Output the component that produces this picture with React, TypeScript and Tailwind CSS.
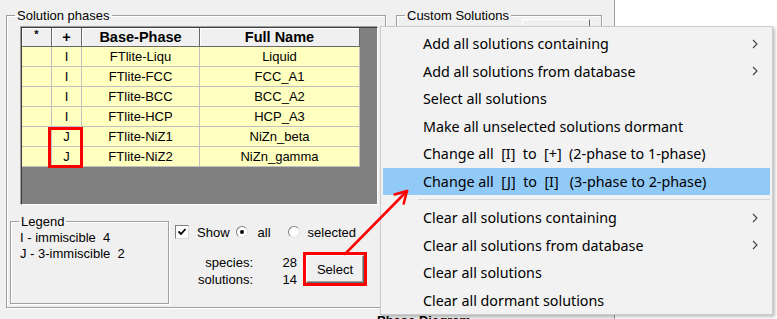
import React from "react";

type Row = { plus: string; base: string; full: string };

const rows: Row[] = [
  { plus: "I", base: "FTlite-Liqu", full: "Liquid" },
  { plus: "I", base: "FTlite-FCC", full: "FCC_A1" },
  { plus: "I", base: "FTlite-BCC", full: "BCC_A2" },
  { plus: "I", base: "FTlite-HCP", full: "HCP_A3" },
  { plus: "J", base: "FTlite-NiZ1", full: "NiZn_beta" },
  { plus: "J", base: "FTlite-NiZ2", full: "NiZn_gamma" },
];

type Item = { label: string; sub?: boolean; hi?: boolean; sepAfter?: boolean };

const items: Item[] = [
  { label: "Add all solutions containing", sub: true },
  { label: "Add all solutions from database", sub: true },
  { label: "Select all solutions" },
  { label: "Make all unselected solutions dormant" },
  { label: "Change all  [I]  to  [+]  (2-phase to 1-phase)" },
  { label: "Change all  [J]  to  [I]   (3-phase to 2-phase)", hi: true, sepAfter: true },
  { label: "Clear all solutions containing", sub: true },
  { label: "Clear all solutions from database", sub: true },
  { label: "Clear all solutions" },
  { label: "Clear all dormant solutions" },
];

function Chevron() {
  return (
    <svg width="6" height="10" viewBox="0 0 6 10" className="block">
      <path d="M1 1 L5 5 L1 9" fill="none" stroke="#404040" strokeWidth="1.1" />
    </svg>
  );
}

export default function App() {
  return (
    <div className="relative w-[777px] h-[319px] overflow-hidden bg-[#f0f0f0] text-[13px] leading-[15px] text-black font-['Liberation_Sans',Arial,sans-serif]">
      <div className="flex items-start">
        {/* left column */}
        <div className="w-[386px] shrink-0 flex flex-col">
          <fieldset className="ml-[6px] mt-[8px] w-[380px] h-[300px] border border-[#a0a0a0] shadow-[inset_1px_1px_0_#fff,1px_1px_0_#fff] pl-[3px] pt-[4px]">
            <legend className="ml-[5px] px-[2px] leading-[15px]">Solution phases</legend>
            {/* grid */}
            <div className="relative ml-[11px] w-[357px] h-[178px] bg-[#808080] border border-t-[#404040] border-l-[#404040] border-r-white border-b-white shadow-[-1px_-1px_0_#a0a0a0]">
              <div className="flex h-[19px]">
                {[
                  { t: "*", w: "w-[30px]" },
                  { t: "+", w: "w-[30px]" },
                  { t: "Base-Phase", w: "w-[118px]" },
                  { t: "Full Name", w: "w-[160px]" },
                ].map((h, i) => (
                  <div
                    key={i}
                    className={`${h.w} h-[19px] flex items-center justify-center bg-[#f0f0f0] border-r border-b border-[#696969] shadow-[inset_1px_1px_0_#fff] font-bold text-[14.5px] leading-[17px]`}
                  >
                    {h.t === "*" ? <span className="text-[11px] -mt-[5px]">*</span> : h.t}
                  </div>
                ))}
              </div>
              {rows.map((r, i) => (
                <div key={i} className="flex h-[20px]">
                  <div className="w-[30px] h-[20px] bg-[#ffffc0] border-r border-b border-[#c0c0c0]" />
                  <div className="w-[30px] h-[20px] bg-[#ffffc0] border-r border-b border-[#c0c0c0] flex items-center justify-center">
                    {r.plus}
                  </div>
                  <div className="w-[118px] h-[20px] bg-[#ffffc0] border-r border-b border-[#c0c0c0] flex items-center justify-center">
                    {r.base}
                  </div>
                  <div className="w-[160px] h-[20px] bg-[#ffffc0] border-r border-b border-[#c0c0c0] flex items-center justify-center">
                    {r.full}
                  </div>
                </div>
              ))}
              {/* red annotation around J cells */}
              <div className="absolute left-[26px] top-[99px] w-[35px] h-[41px] border-[3px] border-[#ff0000]" />
            </div>

            <div className="flex mt-[9px]">
              <fieldset className="w-[159px] h-[90px] border border-[#a0a0a0] shadow-[inset_1px_1px_0_#fff,1px_1px_0_#fff]">
                <legend className="ml-[8px] px-[2px] leading-[15px]">Legend</legend>
                <div className="pl-[9px] pt-[1px] leading-[16px] whitespace-pre">
                  <div>{"I - immiscible  4"}</div>
                  <div>{"J - 3-immiscible  2"}</div>
                </div>
              </fieldset>

              <div className="ml-[6px] pt-[11px] flex flex-col">
                <div className="flex items-center h-[14px]">
                  <div className="w-[14px] h-[14px] bg-white border border-t-[#808080] border-l-[#808080] border-r-[#dcdcdc] border-b-[#dcdcdc] flex items-center justify-center">
                    <svg width="10" height="10" viewBox="0 0 10 10">
                      <path d="M1.5 4.5 L4 7 L8.5 2" fill="none" stroke="#000" strokeWidth="1.8" />
                    </svg>
                  </div>
                  <span className="ml-[8px]">Show</span>
                  <div className="ml-[6px] w-[12px] h-[12px] rounded-full bg-white border border-t-[#808080] border-l-[#808080] border-r-[#e0e0e0] border-b-[#e0e0e0] flex items-center justify-center">
                    <div className="w-[4px] h-[4px] rounded-full bg-black" />
                  </div>
                  <span className="ml-[10px]">all</span>
                  <div className="ml-[17px] w-[12px] h-[12px] rounded-full bg-white border border-t-[#808080] border-l-[#808080] border-r-[#e0e0e0] border-b-[#e0e0e0]" />
                  <span className="ml-[8px]">selected</span>
                </div>

                <div className="flex items-start mt-[13px]">
                  <div className="w-[78px] pt-[1.5px] text-right leading-[17px]">
                    <div>species:</div>
                    <div>solutions:</div>
                  </div>
                  <div className="w-[44px] pt-[1.5px] text-right leading-[17px]">
                    <div>28</div>
                    <div>14</div>
                  </div>
                  <div className="ml-[6px] border-[3px] border-[#ff0000]">
                    <div className="w-[58px] h-[28px] bg-[#f0f0f0] border border-t-white border-l-white border-r-[#696969] border-b-[#696969] shadow-[inset_-1px_-1px_0_#a0a0a0] flex items-center justify-center">
                      Select
                    </div>
                  </div>
                </div>
              </div>
            </div>
          </fieldset>
          <div className="ml-[377px] mt-[5px] font-bold whitespace-nowrap">Phase Diagram</div>
        </div>

        {/* custom solutions */}
        <fieldset className="ml-[10px] mt-[8px] w-[206px] h-[300px] shrink-0 border border-[#a0a0a0] shadow-[inset_1px_1px_0_#fff,1px_1px_0_#fff]">
          <legend className="ml-[8px] px-[2px] leading-[15px]">Custom Solutions</legend>
          <div className="-mt-[4px] ml-[125px] w-[68px] h-[24px] bg-[#f0f0f0] border border-t-white border-l-white border-r-[#696969] border-b-[#696969] flex justify-center pt-[3px] text-[#a0a0a0]">
            Details...
          </div>
        </fieldset>

        <div className="ml-[12px] flex-1 h-[319px] bg-white border-l border-[#a0a0a0]" />
      </div>

      {/* context menu */}
      <div className="absolute left-[380px] top-[26px] w-[393px] h-[289px] bg-[#f2f2f2] border border-[#cccccc] shadow-[2px_2px_3px_rgba(0,0,0,0.25)] pt-[3px] px-[2px] font-['Noto_Sans',sans-serif] text-[14.3px] text-black">
        {items.map((it, i) => (
          <React.Fragment key={i}>
            <div className={`h-[27.5px] flex items-center pl-[40px] pr-[12px] whitespace-pre ${it.hi ? "bg-[#91c9f7]" : ""}`}>
              <span className="flex-1">{it.label}</span>
              {it.sub ? <Chevron /> : null}
            </div>
            {it.sepAfter ? (
              <div className="h-[9px] flex items-center pl-[35px]">
                <div className="w-full h-[1px] bg-[#d7d7d7]" />
              </div>
            ) : null}
          </React.Fragment>
        ))}
      </div>

      {/* red arrow */}
      <svg className="absolute left-0 top-0 pointer-events-none" width="777" height="319">
        <g stroke="#ff0000" strokeWidth="2.5" strokeLinecap="round" fill="none">
          <line x1="345" y1="254" x2="407" y2="191" />
          <line x1="407" y1="191" x2="394.5" y2="194.5" />
          <line x1="407" y1="191" x2="403.7" y2="203.6" />
        </g>
      </svg>
    </div>
  );
}
